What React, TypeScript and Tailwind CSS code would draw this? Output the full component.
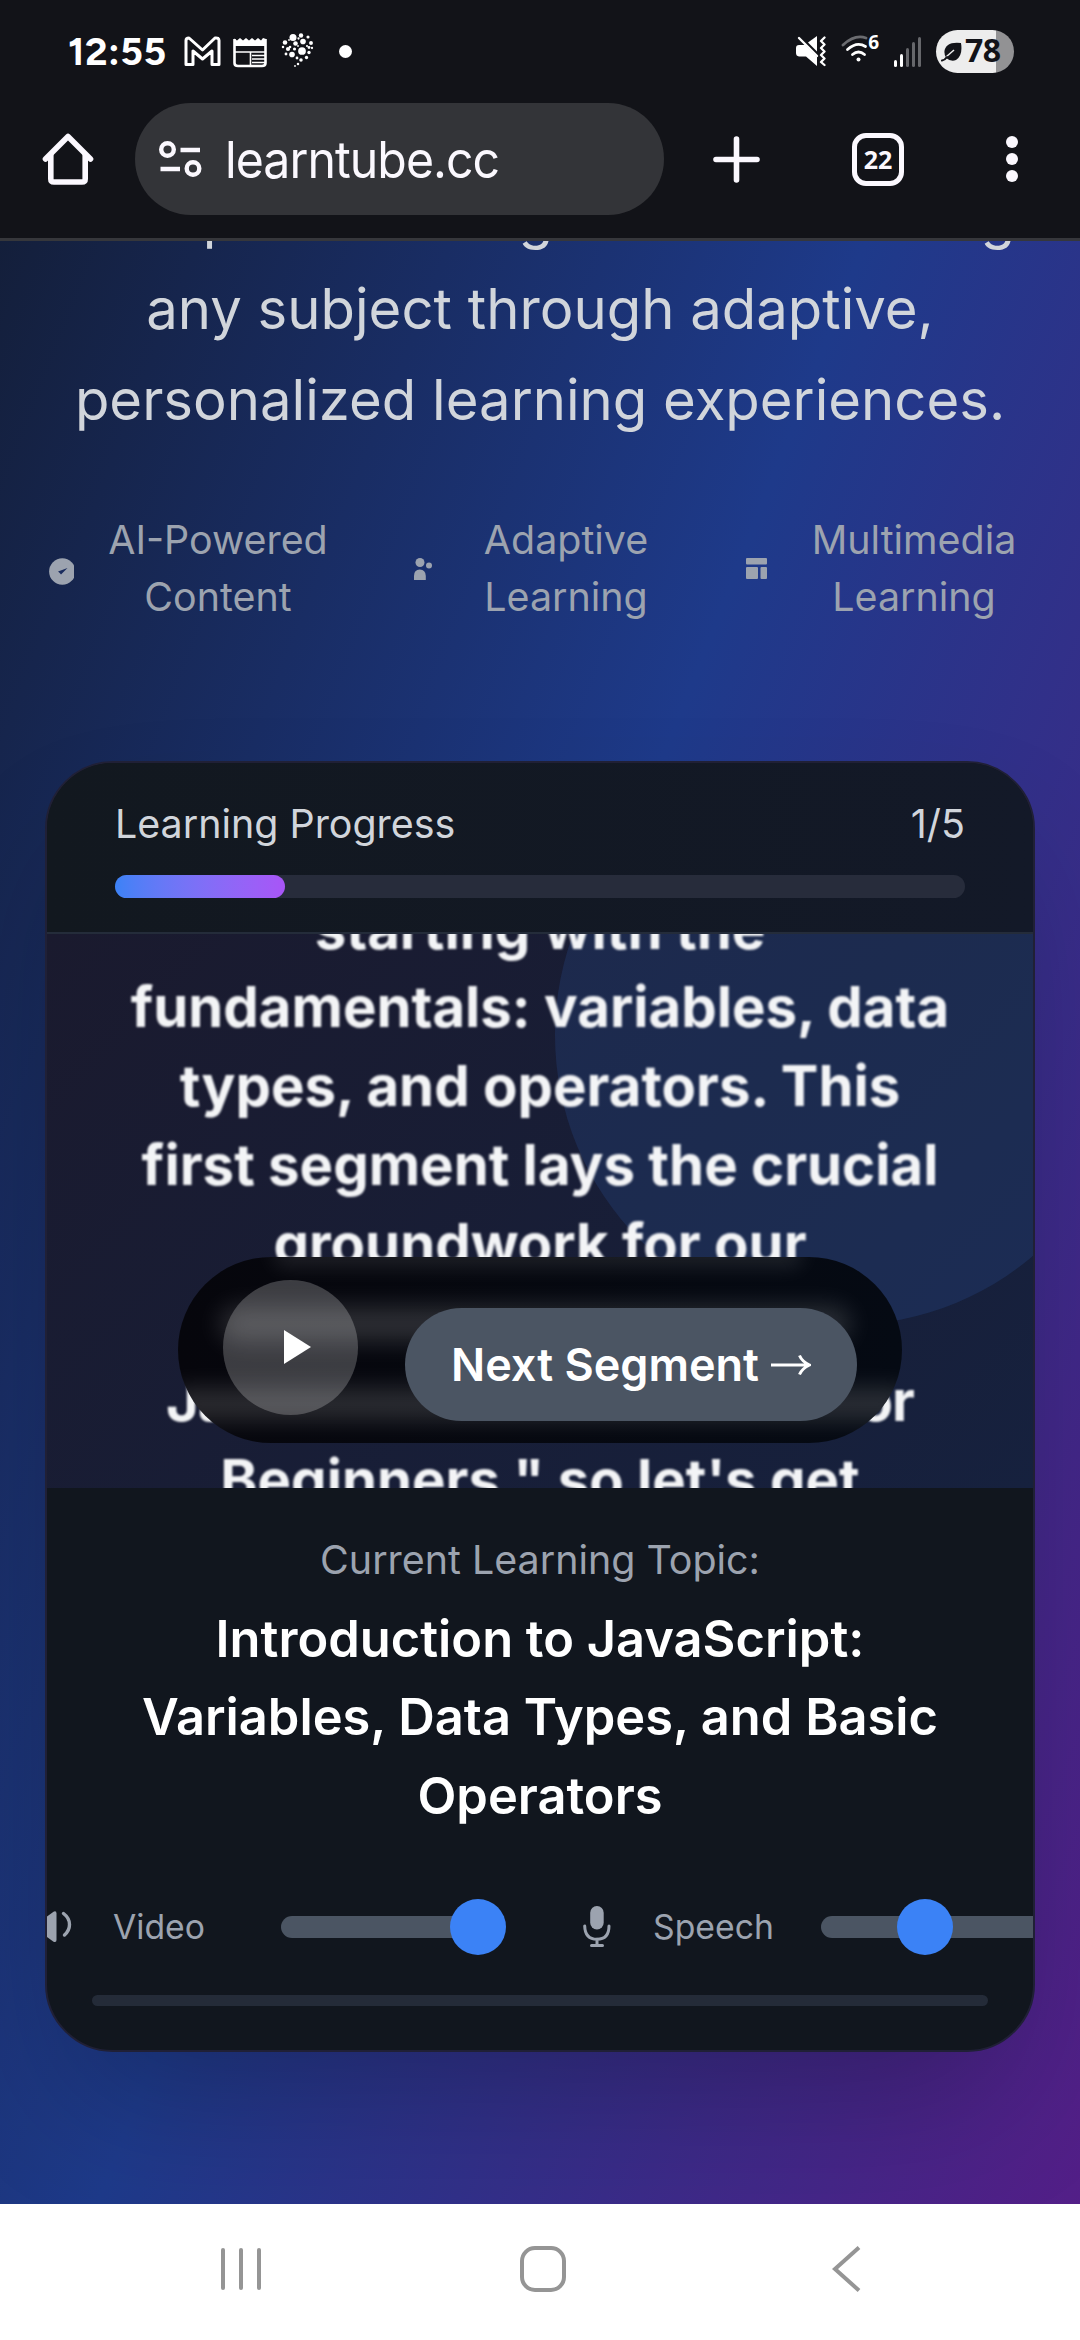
import React from "react";

function StatusBar() {
  const dots: number[][] = [
    [12, 4.5, 4], [20, 2.5, 2.5], [27, 4, 1.8], [4, 9.5, 2.6], [22, 8.5, 3.2], [30, 10, 2.2], [9, 14, 1.5],
    [14.5, 10.5, 2.6], [2, 14, 1.4], [7, 16, 2.4], [13.5, 16, 1.8], [28, 14.5, 1.6], [21, 18, 4.4], [31, 15, 1.3],
    [11, 21.5, 3.2], [5, 21, 1.6], [28, 19.5, 1.9], [25.5, 24.5, 1.9], [16, 25, 1.6], [20, 27, 2], [17, 31, 1.4], [14, 33, 1],
    [17, 13, 1], [17.5, 5.5, 1.3], [8, 7, 1], [26, 13, 1.2],
  ];
  return (
    <div className="flex h-[100px] items-center text-white">
      <span className="ml-[68px] w-[104px] whitespace-nowrap pt-[2px] font-['Figtree','Open_Sans',sans-serif] text-[39px] font-bold leading-none tracking-[0.5px]">12:55</span>
      <svg className="ml-[12px] mt-[2px] h-[31px] w-[37px]" viewBox="0 0 37 31" fill="none" stroke="white" strokeWidth="3" strokeLinejoin="round">
        <path d="M2 4.5Q2 2 5 2L18.5 14L31 2Q35 1.500 35 4.500V28.500H28V15L18.500 23L9 15V28.500H2Z" />
      </svg>
      <svg className="ml-[12px] mt-[4px] h-[31px] w-[34px]" viewBox="0 0 34 31" fill="none" stroke="white">
        <path d="M1.500 2V26Q1.500 29 5 29H29Q32.500 29 32.500 26V2" strokeWidth="2.600" />
        <path d="M1 1.500L4 3.500L7 1L10 3.500L13 1L16 3.500L19 1L22 3.500L25 1L28 3.500L30 1L33 2V9H1Z" fill="white" stroke="none" />
        <path d="M2 15H32M17.500 15V28M19 18.500H32M19 22H32M19 25.500H32" strokeWidth="1.600" />
      </svg>
      <svg className="ml-[14px] mt-[1px] h-[35px] w-[34px]" viewBox="0 0 34 35" fill="white">
        {dots.map(([x, y, r], i) => <circle key={i} cx={x} cy={y} r={r * 0.88} />)}
      </svg>
      <span className="ml-[24px] mt-[3px] size-[13px] rounded-full bg-white" />
      <svg className="ml-[444px] mt-[3px] h-[31px] w-[31px]" viewBox="0 0 31 31">
        <path d="M0 12Q0 9 3 9H9L21 21V30L10 20.500H3Q0 20 0 17Z" fill="white" />
        <path d="M12 6.500L21 0V15.500Z" fill="white" />
        <path d="M3 2L21 20" stroke="white" strokeWidth="2.400" strokeLinecap="round" />
        <path d="M28.500 1.500L25 5L28.500 8.500L25 12L28.500 15.500L25 19L28.500 22.500L25 26L28.500 29" fill="none" stroke="white" strokeWidth="2.300" strokeLinecap="round" strokeLinejoin="round" />
      </svg>
      <div className="relative ml-[14px] h-[32px] w-[38px]">
        <svg className="size-full" viewBox="0 0 38 32" fill="none" stroke="white" strokeWidth="2.800" strokeLinecap="round">
          <path d="M2 11Q14 0 25 4" stroke="#6b6c70" />
          <path d="M6.500 15.500Q16 7 24.500 12.500M11.500 20.500Q17.500 15.500 23.500 20.500" />
          <circle cx="17.500" cy="25.500" r="2" fill="white" stroke="none" />
        </svg>
        <span className="absolute right-0 top-[-1px] font-['Open_Sans'] text-[19px] font-bold leading-none">6</span>
      </div>
      <div className="ml-[15px] mt-[3px] flex h-[30px] items-end gap-[3px]">
        <i className="h-[7px] w-[3px] rounded bg-white" /><i className="h-[13px] w-[3px] rounded bg-white" />
        <i className="h-[19px] w-[3px] rounded bg-[#66676b]" /><i className="h-[25px] w-[3px] rounded bg-[#66676b]" /><i className="h-[30px] w-[3px] rounded bg-[#66676b]" />
      </div>
      <div className="ml-[15px] mt-[3px] flex h-[43px] w-[78px] items-center rounded-full bg-[linear-gradient(to_right,#ededed_60px,#929294_60px)] pl-[5px] text-[#121318]">
        <svg className="h-[20px] w-[21px] shrink-0" viewBox="0 0 21 20">
          <path d="M5 16Q1 8 7 3Q11 0 20 1Q22 14 15 18Q10 20 5 16Z" fill="#121318" />
          <path d="M5 15L13 8" stroke="#ededed" strokeWidth="1.500" />
          <path d="M1 18.500Q4 18 6 15" fill="none" stroke="#121318" strokeWidth="2" strokeLinecap="round" />
        </svg>
        <span className="-mt-[3px] ml-[3px] font-['Open_Sans'] text-[32px] font-bold leading-none tracking-[-0.5px]">78</span>
      </div>
    </div>
  );
}

function BrowserBar() {
  return (
    <div className="flex h-[118px] items-center">
      <svg className="ml-[42px] h-[54px] w-[52px]" viewBox="0 0 52 54" fill="none" stroke="#fbf8fe" strokeWidth="5.600" strokeLinejoin="round" strokeLinecap="round">
        <path d="M3.500 27L26 4.500L48.500 27" />
        <path d="M8.800 23V47Q8.800 50 12 50H40Q43.200 50 43.200 47V23" />
      </svg>
      <div className="ml-[41px] flex h-[112px] w-[529px] items-center rounded-full bg-[#333438] pl-[24px]">
        <svg className="h-[38px] w-[43px]" viewBox="0 0 43 38" fill="none" stroke="#fbf8fe" strokeWidth="4.400">
          <circle cx="8.500" cy="9.500" r="6.300" /><path d="M21.500 10H41M1.500 29H21" /><circle cx="34" cy="28.500" r="6.300" />
        </svg>
        <span className="ml-[23px] origin-left scale-x-[0.945] font-['Inter'] text-[51px] leading-none tracking-[-1px] text-[#fbf8fe]">learntube.cc</span>
      </div>
      <svg className="ml-auto mr-[92px] size-[47px]" viewBox="0 0 47 47" stroke="#fbf8fe" strokeWidth="5.600" strokeLinecap="round"><path d="M23.500 3V44M3 23.500H44" /></svg>
      <div className="flex h-[53px] w-[52px] items-center justify-center rounded-[14px] border-[5.5px] border-[#fbf8fe] font-['Open_Sans'] text-[25px] font-bold leading-none text-[#fbf8fe]">22</div>
      <div className="ml-[102px] mr-[62px] flex flex-col gap-[5px]">
        <i className="size-[12px] rounded-full bg-[#fbf8fe]" /><i className="size-[12px] rounded-full bg-[#fbf8fe]" /><i className="size-[12px] rounded-full bg-[#fbf8fe]" />
      </div>
    </div>
  );
}

function Hero() {
  return (
    <section className="flex flex-col">
      <p className="-mt-[68.5px] whitespace-nowrap text-center text-[56.25px] leading-[91.4px] text-[#d1d5db]">
        Your personal AI guide to mastering
        <br />any subject through adaptive,
        <br />personalized learning experiences.
      </p>
      <div className="mt-[65px] flex items-center text-center text-[39.4px] leading-[57px] text-[#9ca3af]">
        <svg className="ml-[49px] mt-[6px] h-[27px] w-[25px]" viewBox="0 0 25 27"><circle cx="13.300" cy="13.500" r="13.200" fill="#9ca3af" /><path d="M9 13.500L18.500 10L12 16.500L10.500 14.800Z" fill="#1a2c5e" /></svg>
        <span className="ml-[26px] w-[236px]">AI-Powered Content</span>
        <svg className="ml-[78px] h-[22px] w-[18px]" viewBox="0 0 18 22" fill="#9ca3af"><circle cx="6" cy="4.500" r="4.500" /><circle cx="15" cy="7.500" r="3" /><path d="M0 22V18Q0 11.500 5.800 11.500T11.800 18V22Z" /></svg>
        <span className="ml-[42px] w-[184px]">Adaptive Learning</span>
        <svg className="ml-[88px] h-[21px] w-[21px]" viewBox="0 0 21 21" fill="#9ca3af"><rect width="21" height="6.500" rx="1" /><rect y="9" width="12" height="12" rx="1" /><rect x="14.500" y="9" width="6.500" height="12" rx="1" /></svg>
        <span className="ml-[37px] w-[220px]">Multimedia Learning</span>
      </div>
    </section>
  );
}

function VideoPane() {
  return (
    <div className="relative h-[554px] shrink-0 overflow-hidden bg-[linear-gradient(135deg,#1a1a2e,#16213e)]">
      <div className="absolute left-[508px] top-[-189px] size-[580px] rounded-full bg-[#3b82f6]/13" />
      <p className="relative -mt-[44.5px] whitespace-nowrap text-center text-[56.3px] font-bold leading-[78.75px] text-[#f3f4f6] blur-[0.8px]">
        starting with the
        <br />fundamentals: variables, data
        <br />types, and operators. This
        <br />first segment lays the crucial
        <br />groundwork for our
        <br />comprehensive course,
        <br /><span className="tracking-[-1.05px]">JavaScript Crash Course for</span>
        <br />Beginners," so let's get
      </p>
      <div className="absolute left-[131px] top-[323px] flex h-[186px] w-[724px] overflow-hidden rounded-full bg-[linear-gradient(to_right,#06060c,#050a13)]">
        <div className="absolute left-[95px] top-[-14px] h-[24px] w-[530px] rounded-full bg-white/10 blur-[10px]" />
        <div className="absolute left-[42px] top-[50px] h-[34px] w-[630px] rounded-full bg-white/16 blur-[12px]" />
        <div className="absolute left-[-10px] top-[132px] h-[30px] w-[744px] rounded-full bg-white/16 blur-[12px]" />
        <div className="relative ml-[45px] mt-[23px] flex size-[135px] items-center justify-center rounded-full bg-white/22">
          <svg className="-mt-[2px] ml-[13px] h-[34px] w-[27px]" viewBox="0 0 27 34"><path d="M0 0L27 17L0 34Z" fill="white" /></svg>
        </div>
        <div className="relative ml-[47px] mt-[51px] flex h-[113px] w-[452px] items-center justify-center gap-[12px] rounded-full bg-[#4b5563] text-[45px] font-semibold text-white">
          <span className="whitespace-nowrap">Next Segment</span>
          <svg className="h-[22px] w-[40px]" viewBox="0 0 40 22" fill="none" stroke="white" strokeWidth="3"><path d="M0 11H37M28.500 1.500Q31 7.500 38.500 11Q31 14.500 28.500 20.500" /></svg>
        </div>
      </div>
    </div>
  );
}

function Controls() {
  return (
    <div className="flex h-[56px] items-center text-[33.75px] leading-none text-[#9ca3af]">
      <svg className="h-[32px] w-[26px]" viewBox="0 0 26 32" fill="#9ca3af"><path d="M0 5.500L6.500 0.700Q9.500 -0.500 9.500 2.500V29Q9.500 32 6.500 30.700L0 26Z" /><path d="M16.500 2.500Q22.500 7 22.500 13.500Q22.500 19.500 17.500 24" fill="none" stroke="#9ca3af" strokeWidth="3.400" strokeLinecap="round" /></svg>
      <span className="ml-[40px] w-[168px]">Video</span>
      <div className="relative h-[22px] w-[225px] rounded-full">
        <div className="h-full w-[200px] rounded-l-full bg-[#4b5563]" />
        <i className="absolute right-0 top-[-17px] size-[56px] rounded-full bg-[#3b82f6]" />
      </div>
      <svg className="ml-[77px] h-[42px] w-[28px]" viewBox="0 0 28 42" fill="none" stroke="#9ca3af" strokeWidth="3" strokeLinecap="round"><rect x="7.200" width="13.500" height="23.500" rx="6.700" fill="#9ca3af" stroke="none" /><path d="M1.700 20Q2 33.300 14 33.300T26 20M14 33V39M8.500 39.500H19.500" /></svg>
      <span className="ml-[42px] w-[168px]">Speech</span>
      <div className="relative h-[22px] flex-1 rounded-l-full bg-[#4b5563]">
        <i className="absolute left-[76px] top-[-17px] size-[56px] rounded-full bg-[#3b82f6]" />
      </div>
    </div>
  );
}

function LearningCard() {
  return (
    <section className="mx-[45px] mt-[135.3px] flex h-[1291px] flex-col overflow-hidden rounded-[68px] border-2 border-[#202036] bg-[#11161e] shadow-[0_70px_140px_-34px_rgba(0,0,0,0.25)]">
      <header className="h-[171px] shrink-0 border-b-2 border-[#242c3a] bg-[linear-gradient(to_right,#12181f,#131928)] px-[68px] pt-[33px]">
        <div className="flex justify-between text-[39.4px] leading-[56px] text-[#d1d5db]"><span>Learning Progress</span><span>1/5</span></div>
        <div className="mt-[23px] h-[23px] rounded-full bg-[#272c3b]"><div className="h-full w-1/5 rounded-full bg-linear-to-r from-[#3b82f6] to-[#a855f7]" /></div>
      </header>
      <VideoPane />
      <p className="mt-[43.5px] text-center text-[39.4px] leading-[56px] text-[#9ca3af]">Current Learning Topic:</p>
      <h2 className="mt-[12px] text-center text-[50.6px] font-semibold leading-[78.75px] text-white">Introduction to JavaScript:<br />Variables, Data Types, and Basic<br />Operators</h2>
      <div className="mt-[63.25px]"><Controls /></div>
      <div className="mx-[45px] mt-[40px] h-[11px] shrink-0 rounded-full bg-[#242b38]" />
    </section>
  );
}

function NavBar() {
  return (
    <nav className="flex h-[136px] items-center bg-white">
      <div className="ml-[221px] mt-[-6px] flex gap-[14px]"><i className="h-[42px] w-[4px] rounded bg-[#959595]" /><i className="h-[42px] w-[4px] rounded bg-[#959595]" /><i className="h-[42px] w-[4px] rounded bg-[#959595]" /></div>
      <div className="ml-[259px] mt-[-6px] size-[46px] rounded-[15px] border-[4px] border-[#959595]" />
      <svg className="ml-[266px] mt-[-6px] h-[46px] w-[29px]" viewBox="0 0 29 46" fill="none" stroke="#959595" strokeWidth="4"><path d="M27 1.500L3 23L27 44.500" /></svg>
    </nav>
  );
}

export default function App() {
  return (
    <div className="flex h-[2340px] w-[1080px] flex-col overflow-hidden bg-[#121318] font-['Inter',sans-serif]">
      <div className="h-[241px] shrink-0 border-b-[3px] border-[#36373b] bg-[#121318]"><StatusBar /><BrowserBar /></div>
      <main className="h-[1963px] shrink-0 overflow-hidden bg-[linear-gradient(to_bottom_right,#111827,#1e3a8a,#581c87)] bg-[length:1080px_2761px] bg-[position:0_-549px] bg-no-repeat"><Hero /><LearningCard /></main>
      <NavBar />
    </div>
  );
}
